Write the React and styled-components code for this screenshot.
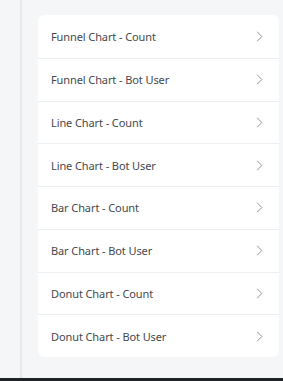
import React from "react";
import styled, { createGlobalStyle } from "styled-components";

const Global = createGlobalStyle`
  html, body { margin: 0; padding: 0; height: 100%; }
  body { background: #f5f6f8; font-family: "Noto Sans", "Open Sans", sans-serif; }
  #root { height: 100%; }
`;

const Page = styled.div`
  height: 381px;
  display: flex;
  flex-direction: column;
  overflow: hidden;
`;

const Main = styled.div`
  flex: 1;
  display: flex;
  min-height: 0;
`;

const Rail = styled.div`
  width: 20px;
  flex: none;
  border-right: 2px solid #e7e8eb;
  background: #f5f6f8;
`;

const Content = styled.div`
  flex: 1;
  padding: 15px 4px 0 16px;
`;

const Card = styled.div`
  background: #ffffff;
  border-radius: 6px;
  overflow: hidden;
`;

const Row = styled.div`
  height: 42.75px;
  box-sizing: border-box;
  display: flex;
  align-items: center;
  justify-content: space-between;
  padding: 0 16px 0 13px;
  border-top: ${(p) => (p.$first ? "none" : "1px solid #eeeff1")};
`;

const Label = styled.span`
  font-size: 11px;
  color: #45484d;
  letter-spacing: -0.1px;
`;

const Chevron = styled.svg`
  width: 7px;
  height: 11px;
  flex: none;
`;

const Footer = styled.div`
  height: 3px;
  flex: none;
  background: #1f2327;
`;

const items = [
  "Funnel Chart - Count",
  "Funnel Chart - Bot User",
  "Line Chart - Count",
  "Line Chart - Bot User",
  "Bar Chart - Count",
  "Bar Chart - Bot User",
  "Donut Chart - Count",
  "Donut Chart - Bot User",
];

export default function App() {
  return (
    <Page>
      <Global />
      <Main>
        <Rail />
        <Content>
          <Card>
            {items.map((t, i) => (
              <Row key={t} $first={i === 0}>
                <Label>{t}</Label>
                <Chevron viewBox="0 0 7 11">
                  <path d="M1.2 0.8 L5.8 5.5 L1.2 10.2" fill="none" stroke="#8f9297" strokeWidth="1" />
                </Chevron>
              </Row>
            ))}
          </Card>
        </Content>
      </Main>
      <Footer />
    </Page>
  );
}
